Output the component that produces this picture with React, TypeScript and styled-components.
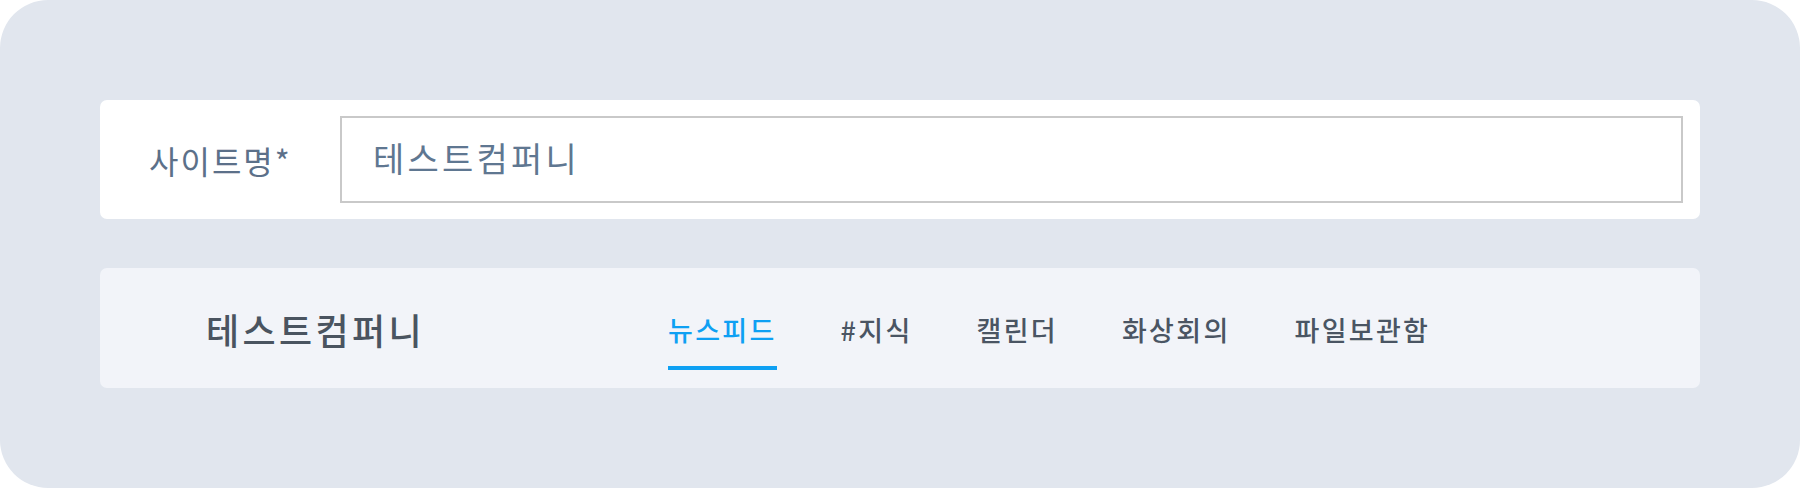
import React from "react";
import styled, { createGlobalStyle } from "styled-components";

const Global = createGlobalStyle`
  html, body { margin: 0; padding: 0; background: #ffffff; }
  * { box-sizing: border-box; }
  body { font-family: "Noto Sans CJK KR", "Noto Sans", sans-serif; }
`;

const Frame = styled.div`
  width: 1800px;
  height: 488px;
  background: #e1e6ee;
  border-radius: 48px;
  padding: 100px;
  display: flex;
  flex-direction: column;
  gap: 49px;
`;

const FieldCard = styled.div`
  height: 119px;
  background: #ffffff;
  border-radius: 7px;
  display: flex;
  align-items: center;
  padding: 16px 17px 16px 49px;
`;

const Label = styled.label`
  width: 191px;
  flex: none;
  font-size: 32px;
  letter-spacing: 2px;
  line-height: 1;
  color: #5c7089;
`;

const Input = styled.input`
  flex: 1;
  height: 87px;
  border: 2px solid #c9c9c9;
  background: #ffffff;
  padding: 0 0 4px 31px;
  font-family: "Noto Sans CJK KR", "Noto Sans", sans-serif;
  font-size: 34px;
  letter-spacing: 3.2px;
  color: #5f7791;
  outline: none;
`;

const HeaderCard = styled.div`
  height: 120px;
  background: #f2f4f9;
  border-radius: 7px;
  display: flex;
  align-items: flex-start;
  padding-left: 106px;
`;

const Brand = styled.div`
  width: 462px;
  flex: none;
  height: 120px;
  display: flex;
  align-items: center;
  padding-top: 2px;
  font-size: 36px;
  font-weight: 500;
  letter-spacing: 3.4px;
  line-height: 1;
  color: #4a5460;
`;

const Nav = styled.nav`
  display: flex;
  gap: 64px;
`;

const Tab = styled.a<{ $active?: boolean }>`
  height: 102px;
  padding-top: 24px;
  display: flex;
  align-items: center;
  border-bottom: 4px solid ${(p) => (p.$active ? "#0ea0f3" : "transparent")};
  font-size: 27px;
  font-weight: 500;
  letter-spacing: 2.3px;
  line-height: 1;
  color: ${(p) => (p.$active ? "#0ea0f3" : "#4a5563")};
  text-decoration: none;
  cursor: pointer;
`;

const tabs = ["뉴스피드", "#지식", "캘린더", "화상회의", "파일보관함"];

export default function App() {
  return (
    <>
      <Global />
      <Frame>
        <FieldCard>
          <Label htmlFor="site-name">사이트명*</Label>
          <Input id="site-name" defaultValue="테스트컴퍼니" />
        </FieldCard>
        <HeaderCard>
          <Brand>테스트컴퍼니</Brand>
          <Nav>
            {tabs.map((t, i) => (
              <Tab key={t} $active={i === 0}>
                {t}
              </Tab>
            ))}
          </Nav>
        </HeaderCard>
      </Frame>
    </>
  );
}
